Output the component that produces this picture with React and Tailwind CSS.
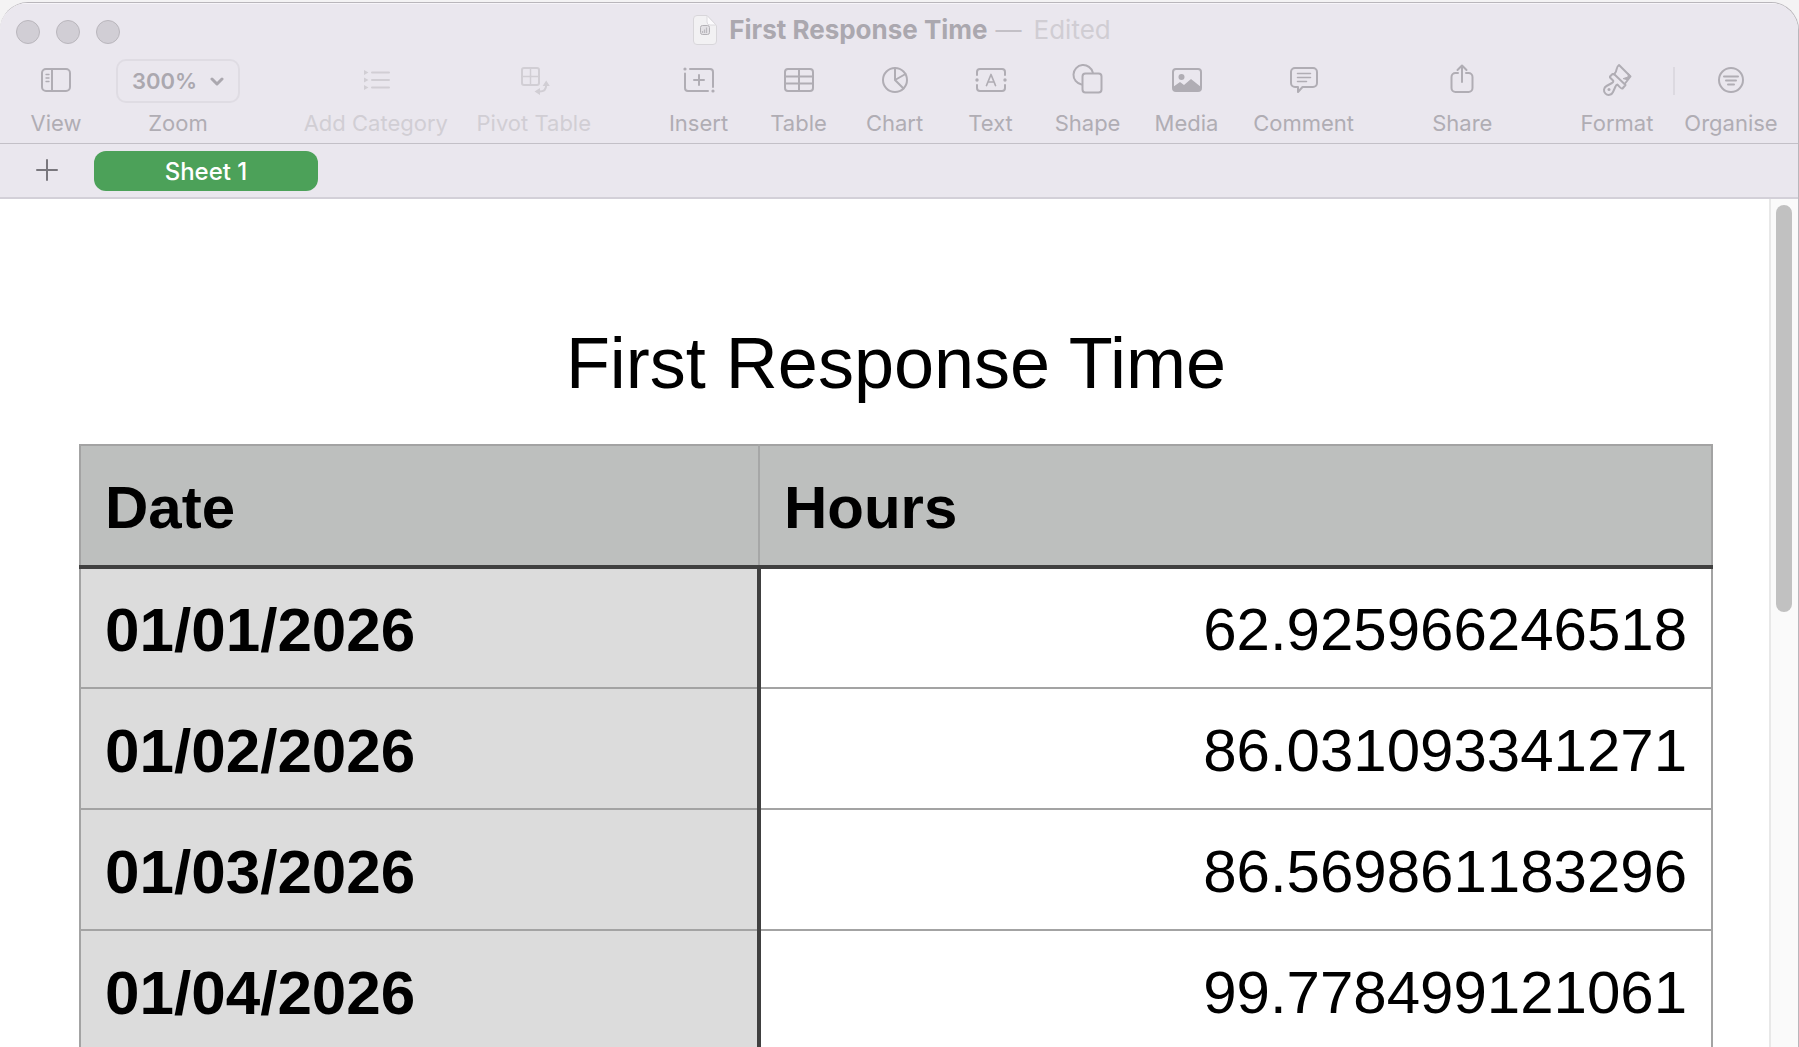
import React from "react";

const rows = [
  ["01/01/2026", "62.925966246518"],
  ["01/02/2026", "86.031093341271"],
  ["01/03/2026", "86.569861183296"],
  ["01/04/2026", "99.778499121061"],
];

function Icon({ children }) {
  return (
    <svg
      width="36"
      height="36"
      viewBox="0 0 36 36"
      fill="none"
      stroke="currentColor"
      strokeWidth="2"
      strokeLinecap="round"
      strokeLinejoin="round"
      aria-hidden="true"
    >
      {children}
    </svg>
  );
}

const ViewIcon = () => (
  <Icon>
    <rect x="4" y="7" width="28" height="22" rx="4" />
    <path d="M14 7v22" />
    <path d="M8 12.5h3M8 16h3M8 19.5h3" strokeWidth="1.3" />
  </Icon>
);

const CategoryIcon = () => (
  <Icon>
    <path d="M14 10.5h17M14 18h17M14 25.5h17" />
    <g fill="currentColor" stroke="none">
      <path d="M6 8l4.500 2.500L6 13zM6 15.500l4.500 2.500-4.500 2.500zM6 23l4.500 2.500-4.500 2.500z" />
    </g>
  </Icon>
);

const PivotIcon = () => (
  <Icon>
    <rect x="6" y="6" width="17" height="17" rx="2" />
    <path d="M14.500 6v17M6 14.500h17" strokeWidth="1.500" />
    <path d="M30.200 23c0 4-2.500 6.500-6.500 6.500" />
    <path d="M30.200 18.500l3.600 5.500h-7.200zM18.500 29.500l5.500-3.600v7.200z" fill="currentColor" stroke="none" />
  </Icon>
);

const InsertIcon = () => (
  <Icon>
    <path d="M9 7h20a3 3 0 0 1 3 3v15" />
    <path d="M4 11.5V26a3 3 0 0 0 3 3h20" />
    <path d="M18 13v10M13 18h10" />
    <circle cx="4" cy="7" r="1.6" fill="currentColor" stroke="none" />
    <circle cx="32" cy="29" r="1.6" fill="currentColor" stroke="none" />
  </Icon>
);

const TableIcon = () => (
  <Icon>
    <rect x="4" y="7" width="28" height="22" rx="3" />
    <path d="M18 7v22M4 14.5h28M4 21.5h28" />
  </Icon>
);

const ChartIcon = () => (
  <Icon>
    <circle cx="18" cy="18" r="12" />
    <path d="M18 6v12l8.5 8.500M18 18l10.500-6" />
  </Icon>
);

const TextIcon = () => (
  <Icon>
    <path d="M4 13v-3a3 3 0 0 1 3-3h22a3 3 0 0 1 3 3v3M4 23v3a3 3 0 0 0 3 3h22a3 3 0 0 0 3-3v-3" />
    <circle cx="4" cy="18" r="1.700" fill="currentColor" stroke="none" />
    <circle cx="32" cy="18" r="1.700" fill="currentColor" stroke="none" />
    <path d="M13.500 23.500L18 12.500l4.500 11M15 20h6" strokeWidth="1.700" />
  </Icon>
);

const ShapeIcon = () => (
  <Icon>
    <path d="M11.500 22.500A9.800 9.800 0 1 1 22.800 10.500" />
    <rect x="12.500" y="11.500" width="19" height="19" rx="3" />
  </Icon>
);

const MediaIcon = () => (
  <Icon>
    <rect x="4" y="7" width="28" height="22" rx="3" />
    <circle cx="12.500" cy="15" r="3" fill="currentColor" stroke="none" />
    <path d="M4 25l7-5 4 3 7-6 10 8v2a2 2 0 0 1-2 2H6a2 2 0 0 1-2-2z" fill="currentColor" stroke="none" />
  </Icon>
);

const CommentIcon = () => (
  <Icon>
    <path d="M9 6h18a4 4 0 0 1 4 4v11a4 4 0 0 1-4 4H16.500L12 30v-5H9a4 4 0 0 1-4-4V10a4 4 0 0 1 4-4z" />
    <path d="M11.500 11.500h13M11.500 15.500h13M11.500 19.500h9" strokeWidth="1.500" />
  </Icon>
);

const ShareIcon = () => (
  <Icon>
    <path d="M14 11h-2.500a4 4 0 0 0-4 4v11a4 4 0 0 0 4 4h13a4 4 0 0 0 4-4V15a4 4 0 0 0-4-4H22" />
    <path d="M18 20V4M13.500 8L18 3.500 22.500 8" />
  </Icon>
);

const FormatIcon = () => (
  <Icon>
    <path d="M15 12.500Q17.500 9.500 17.500 7.500 18 4.500 20 3L31.500 14.500 26 21.500" />
    <path d="M15 12L26.500 23 23.500 26.500Q22 27 18.500 22.500 17 23 16.500 24.500L14 30a4.700 4.700 0 1 1-6.500-6L13 21q2-1.500 1-2.500L11 15.500V14.500L13.500 12z" />
    <path d="M24.500 16.500l4.500-1.500.500-3.500 2 3-3 3z" fill="currentColor" strokeWidth="1" />
    <circle cx="10" cy="27.500" r="1.500" fill="currentColor" stroke="none" />
  </Icon>
);

const OrganiseIcon = () => (
  <Icon>
    <circle cx="18" cy="18" r="12" />
    <path d="M11 14.500h14M13 18.500h10M15 22.500h6" />
  </Icon>
);

function Tool({ label, icon, width, disabled = false }) {
  return (
    <button
      type="button"
      disabled={disabled}
      className={`flex shrink-0 flex-col items-center gap-[6px] ${width} ${
        disabled ? "text-[#d1ced4]" : "text-[#b0adb4]"
      }`}
    >
      <span className="flex h-11 items-center pb-[2px]">{icon}</span>
      <span className="whitespace-nowrap text-[22px] leading-7">{label}</span>
    </button>
  );
}

function DocumentIcon() {
  return (
    <svg width="24" height="32" viewBox="0 0 24 32" aria-hidden="true">
      <path d="M4 1.500h10l9.500 10V27a3.500 3.500 0 0 1-3.500 3.500H4A3.500 3.500 0 0 1 .500 27V5A3.500 3.500 0 0 1 4 1.500z" fill="#f2f1f3" stroke="#d8d6da" />
      <path d="M14 1.500V8a3 3 0 0 0 3 3h6z" fill="#fcfbfd" stroke="#dcdade" />
      <rect x="7.500" y="11.500" width="9" height="9" rx="2" fill="#e3e1e5" stroke="#b3b1b6" />
      <path d="M9.500 19v-2M11.500 19v-3.500M13.500 19v-5.500" stroke="#bcbabf" strokeWidth="1.200" />
    </svg>
  );
}

export default function App() {
  return (
    <div className="h-screen overflow-hidden bg-[#f4f3f4] pt-[2px] font-['Inter',sans-serif]">
      <div className="flex h-full flex-col overflow-hidden rounded-t-[28px] border-r border-t border-[#b9b6bb] bg-white">
        <header className="border-b border-[#c3c0c7] bg-[#eae7ee]">
          <div className="grid h-14 grid-cols-[1fr_auto_1fr] items-center border-t border-[#f7f5f9] pl-4 pr-[10px]">
            <div className="flex gap-4">
              {["Close", "Minimise", "Full screen"].map((name) => (
                <button
                  key={name}
                  type="button"
                  aria-label={name}
                  className="h-6 w-6 rounded-full border border-[#b9b6bc] bg-[#d1ced5]"
                />
              ))}
            </div>
            <div className="flex items-center pb-1 text-[26px] leading-8">
              <DocumentIcon />
              <span className="ml-3 font-bold text-[#aba8af]">First Response Time</span>
              <span className="ml-2 text-[#c3c0c6]">—</span>
              <span className="ml-3 text-[#d0cdd3]">Edited</span>
            </div>
          </div>

          <div className="flex items-start pb-[6px] pl-[30px] pr-5">
            <Tool label="View" icon={<ViewIcon />} width="w-[52px]" />
            <div className="ml-[34px] flex w-[124px] shrink-0 flex-col items-center gap-[6px] text-[#b0adb4]">
              <div className="relative h-11 w-full">
                <select
                  id="zoom"
                  defaultValue="300%"
                  className="h-full w-full appearance-none rounded-[10px] border-2 border-[#dfdce3] bg-transparent pl-[14px] text-[22px] font-semibold text-[#aba8af]"
                >
                  <option>100%</option>
                  <option>200%</option>
                  <option>300%</option>
                </select>
                <svg
                  className="pointer-events-none absolute right-4 top-[18px]"
                  width="14"
                  height="10"
                  viewBox="0 0 14 10"
                  fill="none"
                  stroke="#aba8af"
                  strokeWidth="3"
                  strokeLinecap="round"
                  strokeLinejoin="round"
                  aria-hidden="true"
                >
                  <path d="M2 2l5 5 5-5" />
                </svg>
              </div>
              <label htmlFor="zoom" className="text-[22px] leading-7">
                Zoom
              </label>
            </div>
            <div className="grow-[65]" />
            <div className="flex gap-[30px]">
              <Tool label="Add Category" icon={<CategoryIcon />} width="w-[142px]" disabled />
              <Tool label="Pivot Table" icon={<PivotIcon />} width="w-[114px]" disabled />
            </div>
            <div className="grow-[72]" />
            <div className="flex gap-[30px]">
              <Tool label="Insert" icon={<InsertIcon />} width="w-[72px]" />
              <Tool label="Table" icon={<TableIcon />} width="w-[68px]" />
              <Tool label="Chart" icon={<ChartIcon />} width="w-[64px]" />
              <Tool label="Text" icon={<TextIcon />} width="w-[68px]" />
              <Tool label="Shape" icon={<ShapeIcon />} width="w-[66px]" />
              <Tool label="Media" icon={<MediaIcon />} width="w-[72px]" />
              <Tool label="Comment" icon={<CommentIcon />} width="w-[102px]" />
            </div>
            <div className="grow-[78]" />
            <Tool label="Share" icon={<ShareIcon />} width="w-[60px]" />
            <div className="grow-[88]" />
            <Tool label="Format" icon={<FormatIcon />} width="w-[74px]" />
            <div className="ml-[19px] mr-[9px] mt-2 h-7 w-[2px] bg-[#dcd9e0]" />
            <Tool label="Organise" icon={<OrganiseIcon />} width="w-[94px]" />
          </div>
        </header>

        <nav className="flex h-[55px] shrink-0 items-center border-b-2 border-[#d3d0d8] bg-[#eae7ee] pl-[31px]">
          <button type="button" aria-label="Add sheet" className="flex h-8 w-8 items-center justify-center pb-[2px]">
            <svg width="22" height="22" viewBox="0 0 22 22" stroke="#79777d" strokeWidth="2" strokeLinecap="round" aria-hidden="true">
              <path d="M11 1v20M1 11h20" />
            </svg>
          </button>
          <button
            type="button"
            className="ml-[31px] h-10 w-56 rounded-xl bg-[#4ca159] pt-[2px] text-2xl font-medium text-white"
          >
            Sheet 1
          </button>
        </nav>

        <div className="flex min-h-0 flex-1">
          <main className="min-w-0 flex-1 overflow-hidden pl-[79px] pr-[56px] pt-[124px] font-['Liberation_Sans',Arial,sans-serif] text-black">
            <h1 className="mb-[41px] text-center text-[72px] leading-[80px]">First Response Time</h1>
            <table className="w-full table-fixed border-collapse border-2 border-[#a3a3a3] text-[60px] leading-[68px]">
              <colgroup>
                <col className="w-[41.6%]" />
                <col />
              </colgroup>
              <thead>
                <tr className="bg-[#bdbfbe] text-left">
                  <th scope="col" className="h-[122px] border-b-4 border-r-2 border-b-[#404040] border-r-[#a6a7a7] pl-6 pt-1 font-bold">
                    Date
                  </th>
                  <th scope="col" className="h-[122px] border-b-4 border-[#404040] pl-6 pt-1 font-bold">
                    Hours
                  </th>
                </tr>
              </thead>
              <tbody>
                {rows.map(([date, hours]) => (
                  <tr key={date}>
                    <th
                      scope="row"
                      className="h-[121px] border-b-2 border-r-4 border-b-[#a3a3a3] border-r-[#404040] bg-[#dcdcdc] pl-6 pt-1 text-left text-[62px] font-bold"
                    >
                      {date}
                    </th>
                    <td className="h-[121px] border-b-2 border-[#a3a3a3] pr-6 pt-1 text-right [font-kerning:none]">
                      {hours}
                    </td>
                  </tr>
                ))}
              </tbody>
            </table>
          </main>
          <div className="w-[29px] shrink-0 border-l-2 border-[#e8e8e8] bg-[#fafafa] pl-[5px] pt-[6px]">
            <div className="h-[407px] w-4 rounded-full bg-[#c1c1c1]" />
          </div>
        </div>
      </div>
    </div>
  );
}
